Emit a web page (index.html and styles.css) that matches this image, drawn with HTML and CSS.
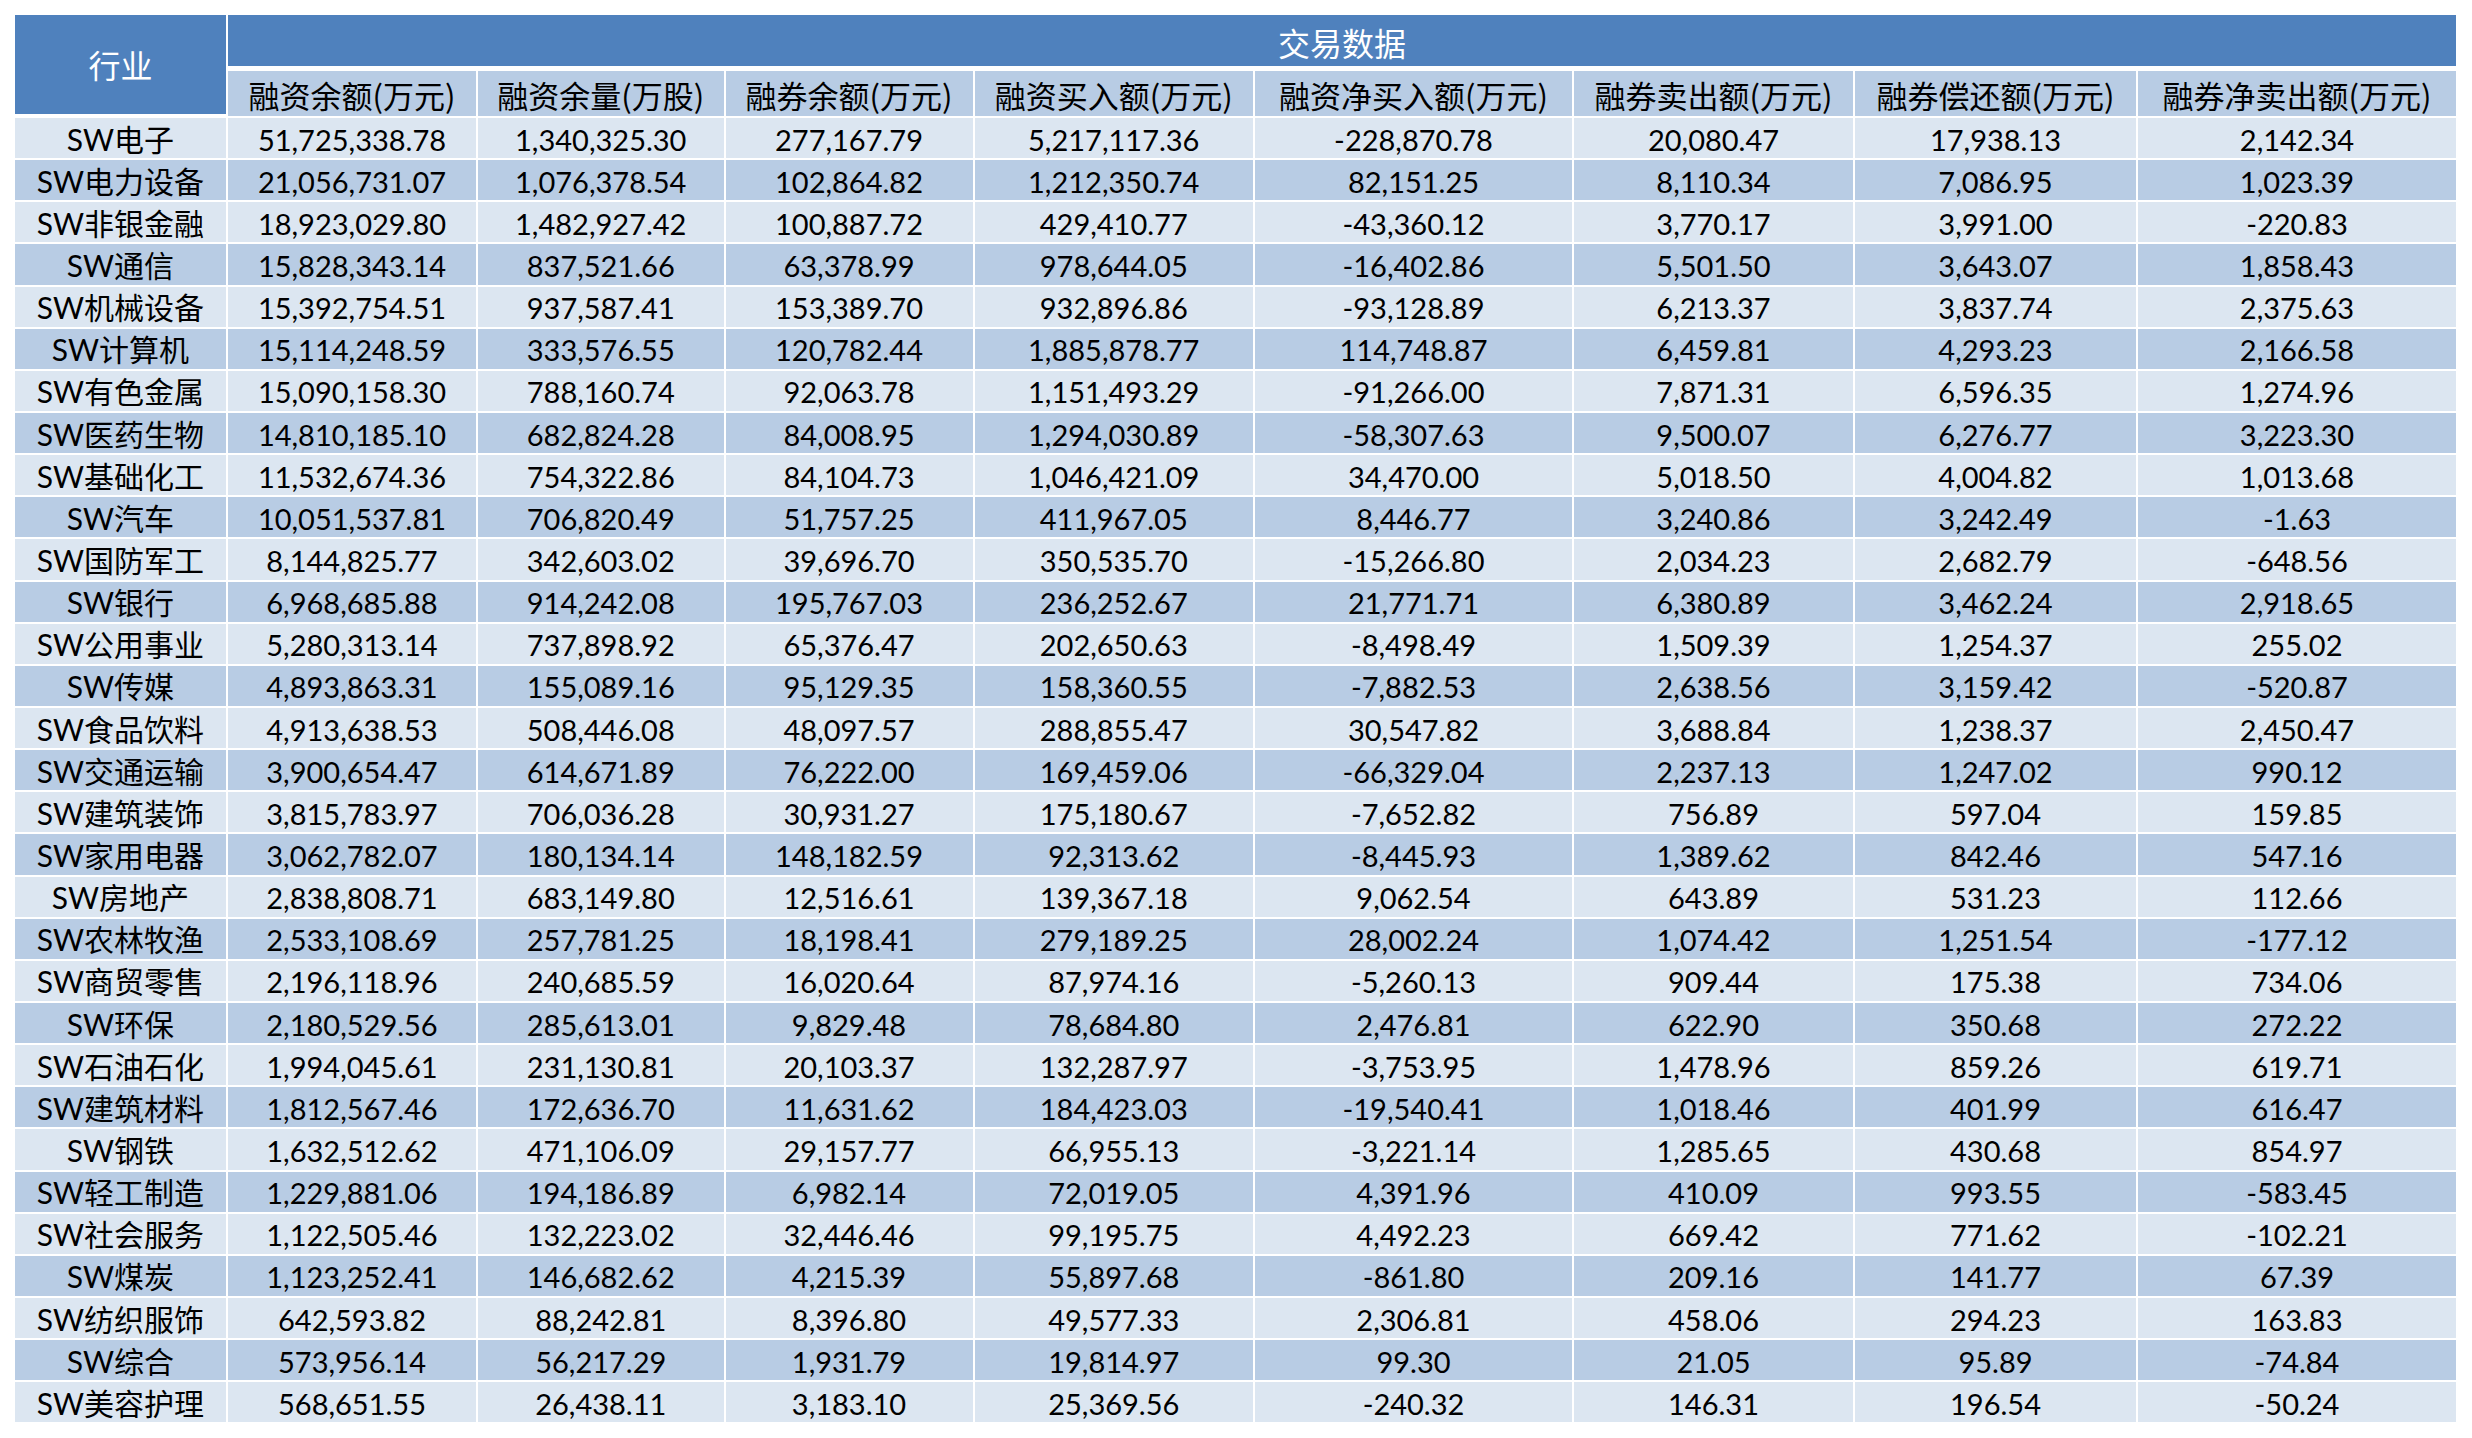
FILE: index.html
```html
<!DOCTYPE html>
<html lang="zh-CN">
<head>
<meta charset="utf-8">
<title>交易数据</title>
<link rel="stylesheet" href="styles.css">
</head>
<body>
<div class="sheet">
  <div class="cell head-dark head-industry">行业</div>
  <div class="cell head-dark head-group">交易数据</div>
  <div class="cell head-light">融资余额(万元)</div>
  <div class="cell head-light">融资余量(万股)</div>
  <div class="cell head-light">融券余额(万元)</div>
  <div class="cell head-light">融资买入额(万元)</div>
  <div class="cell head-light">融资净买入额(万元)</div>
  <div class="cell head-light">融券卖出额(万元)</div>
  <div class="cell head-light">融券偿还额(万元)</div>
  <div class="cell head-light last">融券净卖出额(万元)</div>

  <div class="row row-a"><div class="cell name">SW电子</div><div class="cell num">51,725,338.78</div><div class="cell num">1,340,325.30</div><div class="cell num">277,167.79</div><div class="cell num">5,217,117.36</div><div class="cell num">-228,870.78</div><div class="cell num">20,080.47</div><div class="cell num">17,938.13</div><div class="cell num last">2,142.34</div></div>
  <div class="row row-b"><div class="cell name">SW电力设备</div><div class="cell num">21,056,731.07</div><div class="cell num">1,076,378.54</div><div class="cell num">102,864.82</div><div class="cell num">1,212,350.74</div><div class="cell num">82,151.25</div><div class="cell num">8,110.34</div><div class="cell num">7,086.95</div><div class="cell num last">1,023.39</div></div>
  <div class="row row-a"><div class="cell name">SW非银金融</div><div class="cell num">18,923,029.80</div><div class="cell num">1,482,927.42</div><div class="cell num">100,887.72</div><div class="cell num">429,410.77</div><div class="cell num">-43,360.12</div><div class="cell num">3,770.17</div><div class="cell num">3,991.00</div><div class="cell num last">-220.83</div></div>
  <div class="row row-b"><div class="cell name">SW通信</div><div class="cell num">15,828,343.14</div><div class="cell num">837,521.66</div><div class="cell num">63,378.99</div><div class="cell num">978,644.05</div><div class="cell num">-16,402.86</div><div class="cell num">5,501.50</div><div class="cell num">3,643.07</div><div class="cell num last">1,858.43</div></div>
  <div class="row row-a"><div class="cell name">SW机械设备</div><div class="cell num">15,392,754.51</div><div class="cell num">937,587.41</div><div class="cell num">153,389.70</div><div class="cell num">932,896.86</div><div class="cell num">-93,128.89</div><div class="cell num">6,213.37</div><div class="cell num">3,837.74</div><div class="cell num last">2,375.63</div></div>
  <div class="row row-b"><div class="cell name">SW计算机</div><div class="cell num">15,114,248.59</div><div class="cell num">333,576.55</div><div class="cell num">120,782.44</div><div class="cell num">1,885,878.77</div><div class="cell num">114,748.87</div><div class="cell num">6,459.81</div><div class="cell num">4,293.23</div><div class="cell num last">2,166.58</div></div>
  <div class="row row-a"><div class="cell name">SW有色金属</div><div class="cell num">15,090,158.30</div><div class="cell num">788,160.74</div><div class="cell num">92,063.78</div><div class="cell num">1,151,493.29</div><div class="cell num">-91,266.00</div><div class="cell num">7,871.31</div><div class="cell num">6,596.35</div><div class="cell num last">1,274.96</div></div>
  <div class="row row-b"><div class="cell name">SW医药生物</div><div class="cell num">14,810,185.10</div><div class="cell num">682,824.28</div><div class="cell num">84,008.95</div><div class="cell num">1,294,030.89</div><div class="cell num">-58,307.63</div><div class="cell num">9,500.07</div><div class="cell num">6,276.77</div><div class="cell num last">3,223.30</div></div>
  <div class="row row-a"><div class="cell name">SW基础化工</div><div class="cell num">11,532,674.36</div><div class="cell num">754,322.86</div><div class="cell num">84,104.73</div><div class="cell num">1,046,421.09</div><div class="cell num">34,470.00</div><div class="cell num">5,018.50</div><div class="cell num">4,004.82</div><div class="cell num last">1,013.68</div></div>
  <div class="row row-b"><div class="cell name">SW汽车</div><div class="cell num">10,051,537.81</div><div class="cell num">706,820.49</div><div class="cell num">51,757.25</div><div class="cell num">411,967.05</div><div class="cell num">8,446.77</div><div class="cell num">3,240.86</div><div class="cell num">3,242.49</div><div class="cell num last">-1.63</div></div>
  <div class="row row-a"><div class="cell name">SW国防军工</div><div class="cell num">8,144,825.77</div><div class="cell num">342,603.02</div><div class="cell num">39,696.70</div><div class="cell num">350,535.70</div><div class="cell num">-15,266.80</div><div class="cell num">2,034.23</div><div class="cell num">2,682.79</div><div class="cell num last">-648.56</div></div>
  <div class="row row-b"><div class="cell name">SW银行</div><div class="cell num">6,968,685.88</div><div class="cell num">914,242.08</div><div class="cell num">195,767.03</div><div class="cell num">236,252.67</div><div class="cell num">21,771.71</div><div class="cell num">6,380.89</div><div class="cell num">3,462.24</div><div class="cell num last">2,918.65</div></div>
  <div class="row row-a"><div class="cell name">SW公用事业</div><div class="cell num">5,280,313.14</div><div class="cell num">737,898.92</div><div class="cell num">65,376.47</div><div class="cell num">202,650.63</div><div class="cell num">-8,498.49</div><div class="cell num">1,509.39</div><div class="cell num">1,254.37</div><div class="cell num last">255.02</div></div>
  <div class="row row-b"><div class="cell name">SW传媒</div><div class="cell num">4,893,863.31</div><div class="cell num">155,089.16</div><div class="cell num">95,129.35</div><div class="cell num">158,360.55</div><div class="cell num">-7,882.53</div><div class="cell num">2,638.56</div><div class="cell num">3,159.42</div><div class="cell num last">-520.87</div></div>
  <div class="row row-a"><div class="cell name">SW食品饮料</div><div class="cell num">4,913,638.53</div><div class="cell num">508,446.08</div><div class="cell num">48,097.57</div><div class="cell num">288,855.47</div><div class="cell num">30,547.82</div><div class="cell num">3,688.84</div><div class="cell num">1,238.37</div><div class="cell num last">2,450.47</div></div>
  <div class="row row-b"><div class="cell name">SW交通运输</div><div class="cell num">3,900,654.47</div><div class="cell num">614,671.89</div><div class="cell num">76,222.00</div><div class="cell num">169,459.06</div><div class="cell num">-66,329.04</div><div class="cell num">2,237.13</div><div class="cell num">1,247.02</div><div class="cell num last">990.12</div></div>
  <div class="row row-a"><div class="cell name">SW建筑装饰</div><div class="cell num">3,815,783.97</div><div class="cell num">706,036.28</div><div class="cell num">30,931.27</div><div class="cell num">175,180.67</div><div class="cell num">-7,652.82</div><div class="cell num">756.89</div><div class="cell num">597.04</div><div class="cell num last">159.85</div></div>
  <div class="row row-b"><div class="cell name">SW家用电器</div><div class="cell num">3,062,782.07</div><div class="cell num">180,134.14</div><div class="cell num">148,182.59</div><div class="cell num">92,313.62</div><div class="cell num">-8,445.93</div><div class="cell num">1,389.62</div><div class="cell num">842.46</div><div class="cell num last">547.16</div></div>
  <div class="row row-a"><div class="cell name">SW房地产</div><div class="cell num">2,838,808.71</div><div class="cell num">683,149.80</div><div class="cell num">12,516.61</div><div class="cell num">139,367.18</div><div class="cell num">9,062.54</div><div class="cell num">643.89</div><div class="cell num">531.23</div><div class="cell num last">112.66</div></div>
  <div class="row row-b"><div class="cell name">SW农林牧渔</div><div class="cell num">2,533,108.69</div><div class="cell num">257,781.25</div><div class="cell num">18,198.41</div><div class="cell num">279,189.25</div><div class="cell num">28,002.24</div><div class="cell num">1,074.42</div><div class="cell num">1,251.54</div><div class="cell num last">-177.12</div></div>
  <div class="row row-a"><div class="cell name">SW商贸零售</div><div class="cell num">2,196,118.96</div><div class="cell num">240,685.59</div><div class="cell num">16,020.64</div><div class="cell num">87,974.16</div><div class="cell num">-5,260.13</div><div class="cell num">909.44</div><div class="cell num">175.38</div><div class="cell num last">734.06</div></div>
  <div class="row row-b"><div class="cell name">SW环保</div><div class="cell num">2,180,529.56</div><div class="cell num">285,613.01</div><div class="cell num">9,829.48</div><div class="cell num">78,684.80</div><div class="cell num">2,476.81</div><div class="cell num">622.90</div><div class="cell num">350.68</div><div class="cell num last">272.22</div></div>
  <div class="row row-a"><div class="cell name">SW石油石化</div><div class="cell num">1,994,045.61</div><div class="cell num">231,130.81</div><div class="cell num">20,103.37</div><div class="cell num">132,287.97</div><div class="cell num">-3,753.95</div><div class="cell num">1,478.96</div><div class="cell num">859.26</div><div class="cell num last">619.71</div></div>
  <div class="row row-b"><div class="cell name">SW建筑材料</div><div class="cell num">1,812,567.46</div><div class="cell num">172,636.70</div><div class="cell num">11,631.62</div><div class="cell num">184,423.03</div><div class="cell num">-19,540.41</div><div class="cell num">1,018.46</div><div class="cell num">401.99</div><div class="cell num last">616.47</div></div>
  <div class="row row-a"><div class="cell name">SW钢铁</div><div class="cell num">1,632,512.62</div><div class="cell num">471,106.09</div><div class="cell num">29,157.77</div><div class="cell num">66,955.13</div><div class="cell num">-3,221.14</div><div class="cell num">1,285.65</div><div class="cell num">430.68</div><div class="cell num last">854.97</div></div>
  <div class="row row-b"><div class="cell name">SW轻工制造</div><div class="cell num">1,229,881.06</div><div class="cell num">194,186.89</div><div class="cell num">6,982.14</div><div class="cell num">72,019.05</div><div class="cell num">4,391.96</div><div class="cell num">410.09</div><div class="cell num">993.55</div><div class="cell num last">-583.45</div></div>
  <div class="row row-a"><div class="cell name">SW社会服务</div><div class="cell num">1,122,505.46</div><div class="cell num">132,223.02</div><div class="cell num">32,446.46</div><div class="cell num">99,195.75</div><div class="cell num">4,492.23</div><div class="cell num">669.42</div><div class="cell num">771.62</div><div class="cell num last">-102.21</div></div>
  <div class="row row-b"><div class="cell name">SW煤炭</div><div class="cell num">1,123,252.41</div><div class="cell num">146,682.62</div><div class="cell num">4,215.39</div><div class="cell num">55,897.68</div><div class="cell num">-861.80</div><div class="cell num">209.16</div><div class="cell num">141.77</div><div class="cell num last">67.39</div></div>
  <div class="row row-a"><div class="cell name">SW纺织服饰</div><div class="cell num">642,593.82</div><div class="cell num">88,242.81</div><div class="cell num">8,396.80</div><div class="cell num">49,577.33</div><div class="cell num">2,306.81</div><div class="cell num">458.06</div><div class="cell num">294.23</div><div class="cell num last">163.83</div></div>
  <div class="row row-b"><div class="cell name">SW综合</div><div class="cell num">573,956.14</div><div class="cell num">56,217.29</div><div class="cell num">1,931.79</div><div class="cell num">19,814.97</div><div class="cell num">99.30</div><div class="cell num">21.05</div><div class="cell num">95.89</div><div class="cell num last">-74.84</div></div>
  <div class="row row-a"><div class="cell name">SW美容护理</div><div class="cell num">568,651.55</div><div class="cell num">26,438.11</div><div class="cell num">3,183.10</div><div class="cell num">25,369.56</div><div class="cell num">-240.32</div><div class="cell num">146.31</div><div class="cell num">196.54</div><div class="cell num last">-50.24</div></div>
</div>
</body>
</html>
```

FILE: styles.css
```css
html, body {
  margin: 0;
  padding: 0;
  background: #ffffff;
}

body {
  padding: 15px 0 0 15px;
}

.sheet {
  display: grid;
  width: 2441px;
  grid-template-columns: 213px 250px 247.5px 249px 280.5px 319px 281px 283px 318px;
  grid-template-rows: 56px 47px repeat(31, 42.15px);
  font-family: Lato, "Noto Sans CJK SC", sans-serif;
  color: #000000;
}

.row {
  display: contents;
}

.cell {
  box-sizing: border-box;
  display: flex;
  align-items: center;
  justify-content: center;
  border-right: 2px solid #ffffff;
  border-bottom: 2px solid #ffffff;
  line-height: 1;
  white-space: nowrap;
  overflow: hidden;
}

.cell.last {
  border-right: 0;
}

.head-dark {
  background: #4f81bd;
  color: #ffffff;
  font-family: "Noto Sans CJK SC", sans-serif;
  font-size: 32px;
}

.head-industry {
  grid-row: 1 / span 2;
  grid-column: 1;
  border-bottom: 4px solid #ffffff;
  padding-bottom: 2px;
}

.head-group {
  grid-row: 1;
  grid-column: 2 / span 8;
  border-bottom: 5px solid #ffffff;
  border-right: 0;
  padding-top: 2px;
}

.head-light {
  background: #b8cce4;
  font-family: "Noto Sans CJK SC", sans-serif;
  font-size: 31px;
  padding-top: 1px;
}

.row-a > .cell {
  background: #dce6f1;
}

.row-b > .cell {
  background: #b8cce4;
}

.num {
  font-size: 29px;
  padding-top: 2px;
}

.name {
  font-size: 30px;
  padding-top: 1px;
}
```
